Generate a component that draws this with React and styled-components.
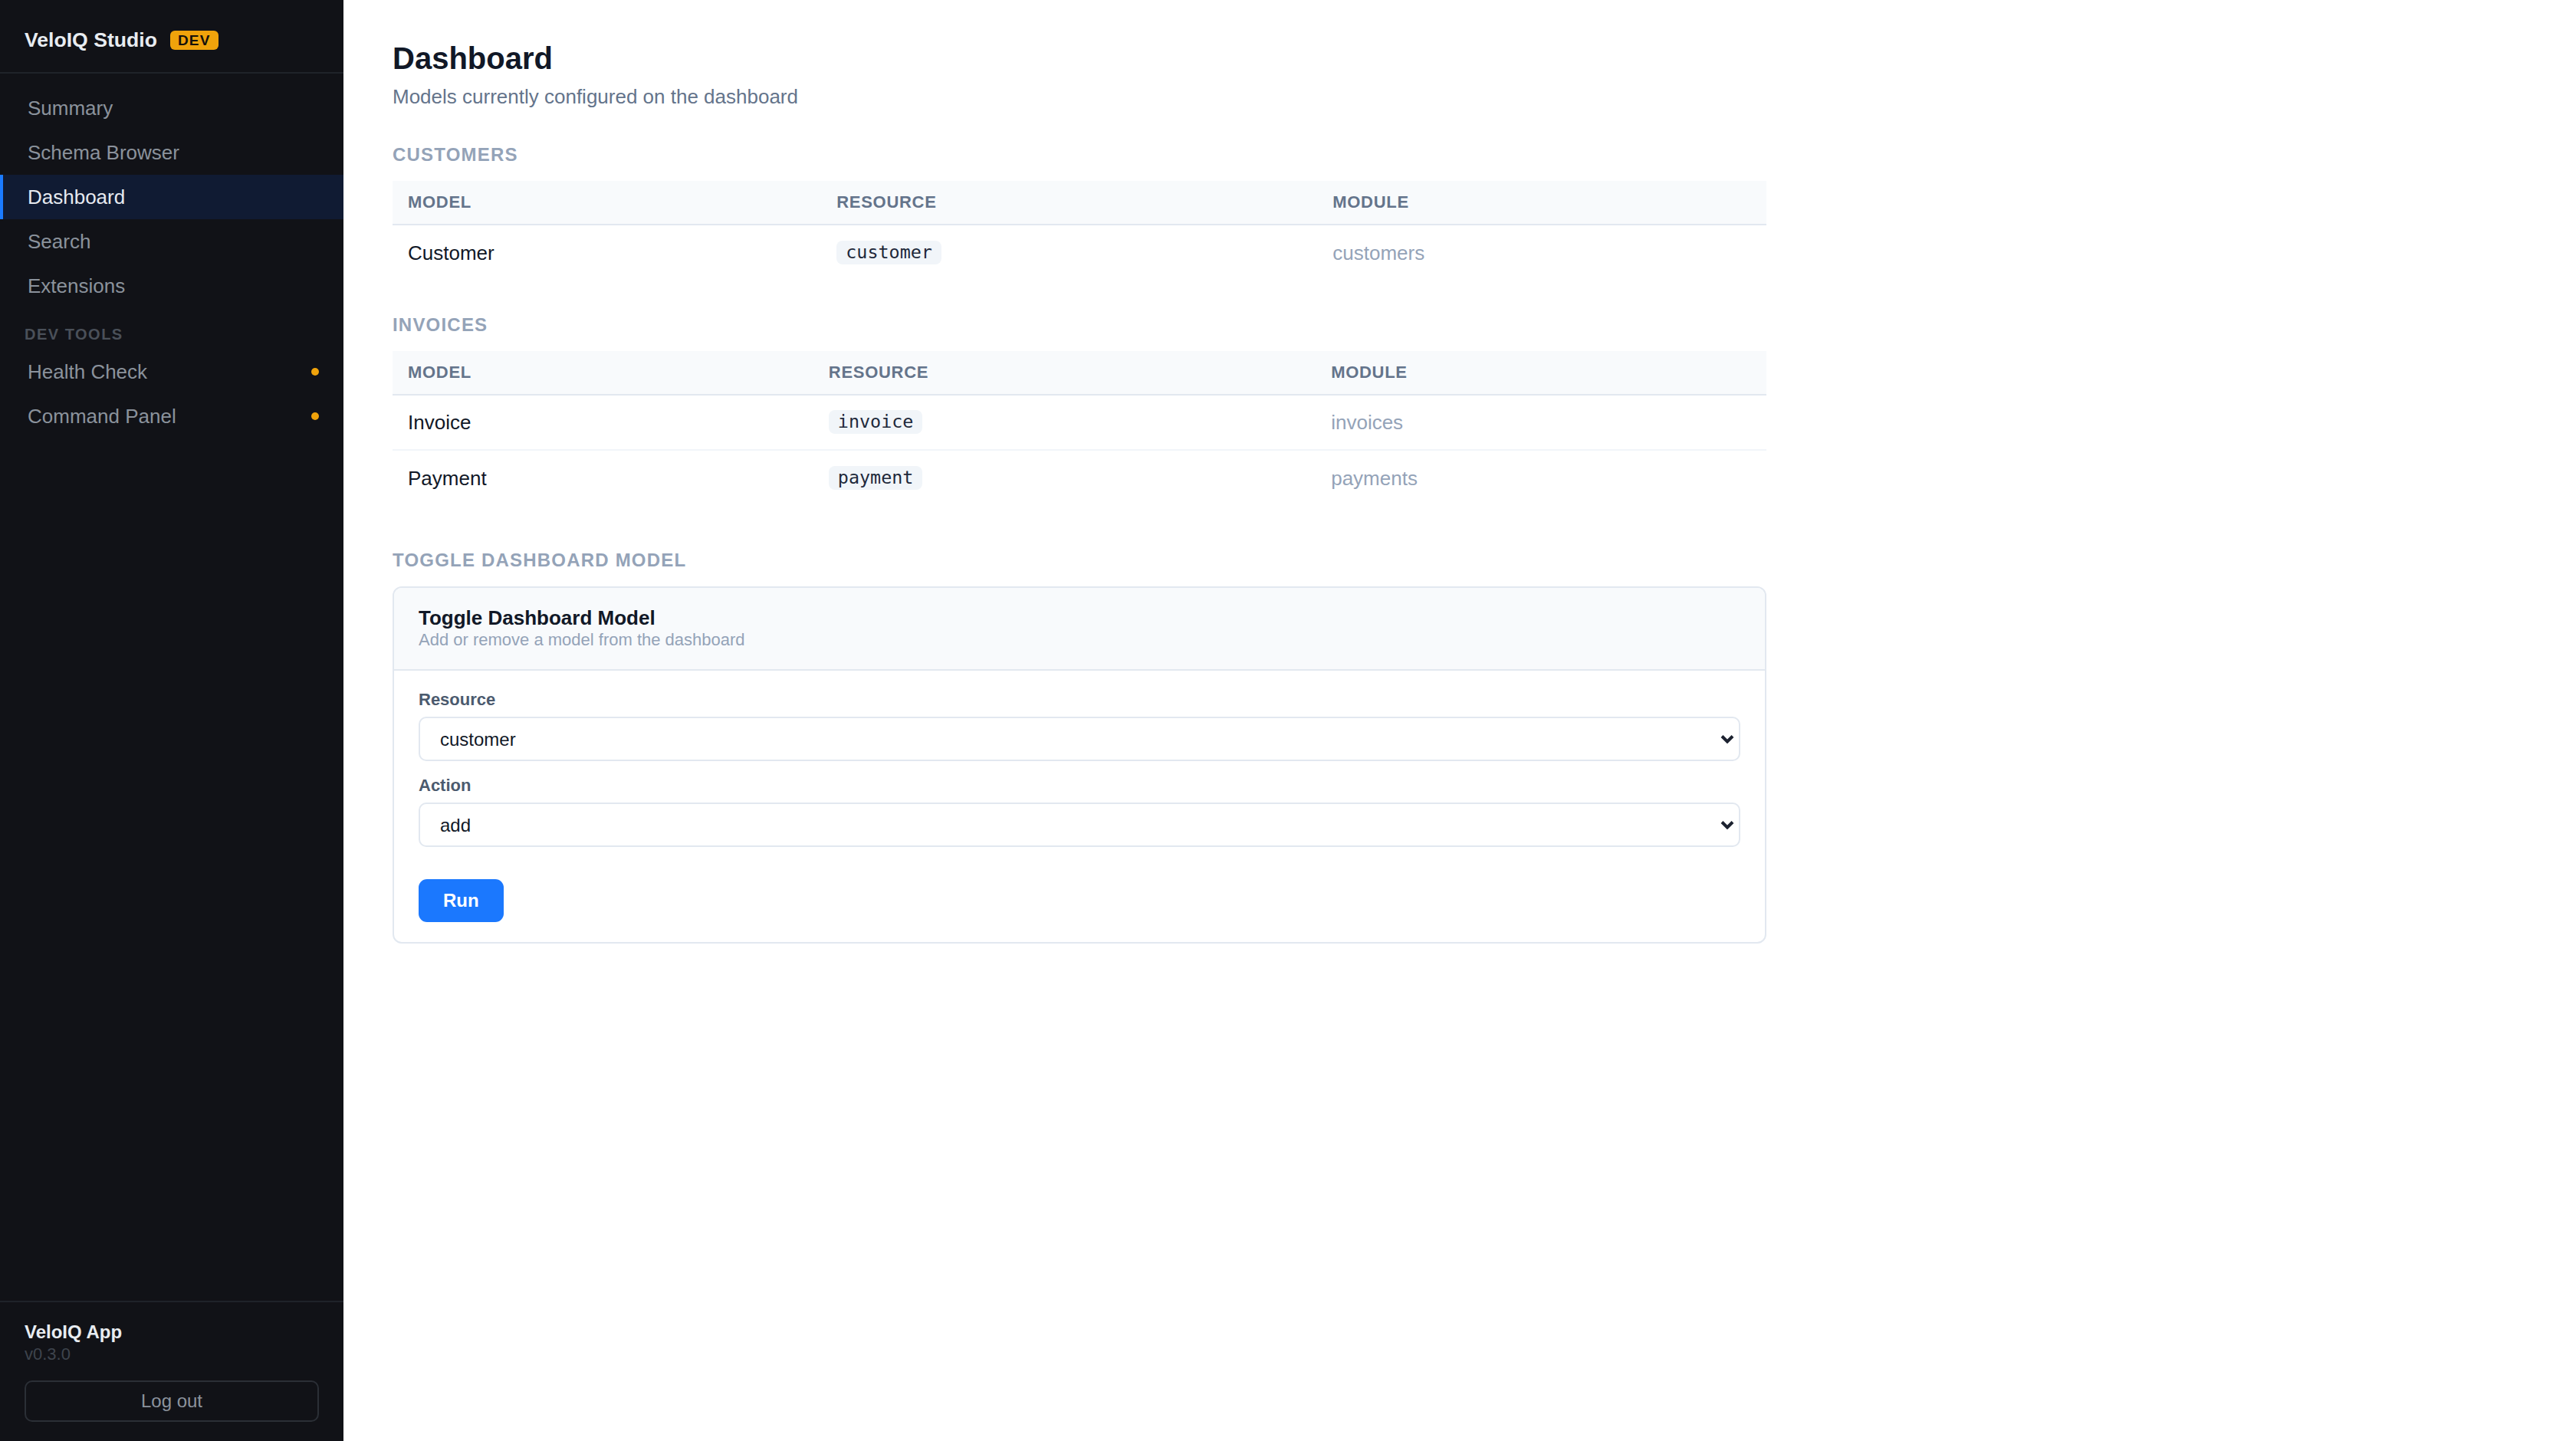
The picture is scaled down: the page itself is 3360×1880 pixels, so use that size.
import React, { useState } from "react"
import styled, { createGlobalStyle } from "styled-components"

const GlobalStyle = createGlobalStyle`
	* {
		box-sizing: border-box;
	}
	html,
	body {
		margin: 0;
		padding: 0;
		height: 100%;
	}
	body {
		font-family: "Liberation Sans", Arial, sans-serif;
		background: #ffffff;
		color: #111827;
	}
`

const navItems = [
	{ label: "Summary" },
	{ label: "Schema Browser" },
	{ label: "Dashboard", active: true },
	{ label: "Search" },
	{ label: "Extensions" },
]

const devItems = [{ label: "Health Check" }, { label: "Command Panel" }]

const sections = [
	{
		title: "Customers",
		rows: [{ model: "Customer", resource: "customer", module: "customers" }],
	},
	{
		title: "Invoices",
		rows: [
			{ model: "Invoice", resource: "invoice", module: "invoices" },
			{ model: "Payment", resource: "payment", module: "payments" },
		],
	},
]

function ChevronDown() {
	return (
		<Chevron width="18" height="12" viewBox="0 0 18 12" aria-hidden="true">
			<polyline
				points="2,2.5 9,9.5 16,2.5"
				fill="none"
				stroke="#1c2230"
				strokeWidth="4"
				strokeLinejoin="miter"
			/>
		</Chevron>
	)
}

function App() {
	const [resource, setResource] = useState("customer")
	const [action, setAction] = useState("add")

	const handleRun = (e) => {
		e.preventDefault()
	}

	return (
		<Shell>
			<GlobalStyle />
			<Sidebar>
				<Brand>
					<BrandName>VeloIQ Studio</BrandName>
					<EnvBadge>DEV</EnvBadge>
				</Brand>

				<Nav>
					{navItems.map((item) => (
						<NavItem key={item.label} $active={item.active}>
							{item.label}
						</NavItem>
					))}
					<NavGroupLabel>Dev Tools</NavGroupLabel>
					{devItems.map((item) => (
						<NavItem key={item.label}>
							{item.label}
							<NavDot />
						</NavItem>
					))}
				</Nav>

				<SidebarFooter>
					<AppName>VeloIQ App</AppName>
					<AppVersion>v0.3.0</AppVersion>
					<LogoutButton>Log out</LogoutButton>
				</SidebarFooter>
			</Sidebar>

			<Main>
				<Content>
					<Title>Dashboard</Title>
					<Subtitle>Models currently configured on the dashboard</Subtitle>

					{sections.map((section) => (
						<Section key={section.title} $gap={43}>
							<SectionLabel>{section.title}</SectionLabel>
							<Table>
								<thead>
									<tr>
										<Th>Model</Th>
										<Th>Resource</Th>
										<Th>Module</Th>
									</tr>
								</thead>
								<tbody>
									{section.rows.map((row) => (
										<Row key={row.resource}>
											<Td>{row.model}</Td>
											<Td>
												<Code>{row.resource}</Code>
											</Td>
											<Td $muted>{row.module}</Td>
										</Row>
									))}
								</tbody>
							</Table>
						</Section>
					))}

					<Section $gap={56}>
						<SectionLabel>Toggle Dashboard Model</SectionLabel>
						<Card>
							<CardHeader>
								<CardTitle>Toggle Dashboard Model</CardTitle>
								<CardHint>Add or remove a model from the dashboard</CardHint>
							</CardHeader>
							<CardBody onSubmit={handleRun}>
								<Field>
									<FieldLabel>Resource</FieldLabel>
									<SelectWrap>
										<Select
											value={resource}
											onChange={(e) => setResource(e.target.value)}
										>
											<option value="customer">customer</option>
											<option value="invoice">invoice</option>
											<option value="payment">payment</option>
										</Select>
										<ChevronDown />
									</SelectWrap>
								</Field>
								<Field>
									<FieldLabel>Action</FieldLabel>
									<SelectWrap>
										<Select
											value={action}
											onChange={(e) => setAction(e.target.value)}
										>
											<option value="add">add</option>
											<option value="remove">remove</option>
										</Select>
										<ChevronDown />
									</SelectWrap>
								</Field>
								<Actions>
									<RunButton type="submit">Run</RunButton>
								</Actions>
							</CardBody>
						</Card>
					</Section>
				</Content>
			</Main>
		</Shell>
	)
}

export default App

const Shell = styled.div`
	display: flex;
	min-height: 100vh;
`

/* sidebar */

const Sidebar = styled.aside`
	width: 448px;
	flex-shrink: 0;
	height: 100vh;
	position: sticky;
	top: 0;
	display: flex;
	flex-direction: column;
	background: #111217;
`

const Brand = styled.div`
	height: 96px;
	padding: 10px 32px 0;
	display: flex;
	align-items: center;
	gap: 17px;
	border-bottom: 2px solid #1f2329;
`

const BrandName = styled.span`
	font-size: 26.6px;
	font-weight: 700;
	color: #e8ecf1;
`

const EnvBadge = styled.span`
	height: 25px;
	line-height: 25px;
	padding: 0 10px;
	border-radius: 6px;
	background: #f0a30b;
	color: #15110a;
	font-size: 19px;
	font-weight: 700;
	letter-spacing: 1.2px;
`

const Nav = styled.nav`
	display: flex;
	flex-direction: column;
	padding-top: 16px;
`

const NavItem = styled.a`
	height: 58px;
	display: flex;
	align-items: center;
	justify-content: space-between;
	padding: 0 32px 0 32px;
	border-left: 4px solid ${(p) => (p.$active ? "#1b7bff" : "transparent")};
	background: ${(p) => (p.$active ? "#101b33" : "transparent")};
	color: ${(p) => (p.$active ? "#e6eaf0" : "#8b929c")};
	font-size: 26px;
	cursor: pointer;
`

const NavDot = styled.span`
	width: 10px;
	height: 10px;
	border-radius: 50%;
	background: #f0a30b;
`

const NavGroupLabel = styled.div`
	padding: 22px 32px 8px;
	line-height: 24px;
	font-size: 20px;
	font-weight: 700;
	letter-spacing: 1.5px;
	text-transform: uppercase;
	color: #4a5059;
`

const SidebarFooter = styled.div`
	margin-top: auto;
	padding: 24px 32px 25px;
	border-top: 2px solid #1f2329;
`

const AppName = styled.div`
	font-size: 24px;
	line-height: 30px;
	font-weight: 700;
	color: #e8ecf1;
`

const AppVersion = styled.div`
	font-size: 22px;
	line-height: 28px;
	color: #3e444d;
`

const LogoutButton = styled.button`
	display: block;
	width: 100%;
	height: 54px;
	margin-top: 20px;
	border: 2px solid #2b2f36;
	border-radius: 10px;
	background: transparent;
	color: #8c939d;
	font-family: inherit;
	font-size: 24px;
	cursor: pointer;
`

/* main area */

const Main = styled.main`
	flex: 1;
	padding: 48px 64px;
`

const Content = styled.div`
	max-width: 1792px;
`

const Title = styled.h1`
	margin: 0;
	font-size: 40px;
	line-height: 56px;
	font-weight: 700;
	color: #111827;
`

const Subtitle = styled.p`
	margin: 5px 0 0;
	font-size: 26px;
	line-height: 34px;
	color: #64748b;
`

const Section = styled.section`
	margin-top: ${(p) => p.$gap}px;
`

const SectionLabel = styled.h2`
	margin: 0 0 18px;
	font-size: 24px;
	line-height: 32px;
	font-weight: 700;
	letter-spacing: 1.2px;
	text-transform: uppercase;
	color: #94a3b8;
`

const Table = styled.table`
	width: 100%;
	border-collapse: collapse;
`

const Th = styled.th`
	padding: 16px 20px;
	line-height: 24px;
	background: #f8fafc;
	border-bottom: 2px solid #e2e8f0;
	text-align: left;
	font-size: 22px;
	font-weight: 700;
	letter-spacing: 0.7px;
	text-transform: uppercase;
	color: #64748b;
`

const Row = styled.tr`
	& + & td {
		border-top: 2px solid #f1f5f9;
	}
`

const Td = styled.td`
	height: 72px;
	padding: 0 20px;
	line-height: 32px;
	font-size: 26px;
	vertical-align: middle;
	color: ${(p) => (p.$muted ? "#94a3b8" : "#111827")};
`

const Code = styled.code`
	display: inline-block;
	padding: 3px 12px;
	border-radius: 8px;
	background: #f1f5f9;
	font-family: "DejaVu Sans Mono", "Liberation Mono", monospace;
	font-size: 0.9em;
	line-height: 25px;
	color: #1e293b;
	vertical-align: top;
`

/* toggle form card */

const Card = styled.div`
	border: 2px solid #e2e8f0;
	border-radius: 12px;
	overflow: hidden;
`

const CardHeader = styled.div`
	padding: 24px 32px;
	background: #f8fafc;
	border-bottom: 2px solid #e2e8f0;
`

const CardTitle = styled.div`
	font-size: 26px;
	line-height: 30px;
	font-weight: 700;
	color: #111827;
`

const CardHint = styled.div`
	font-size: 22px;
	line-height: 28px;
	color: #94a3b8;
`

const CardBody = styled.form`
	display: flex;
	flex-direction: column;
	gap: 18px;
	padding: 24px 32px 26px;
`

const Field = styled.div`
	display: flex;
	flex-direction: column;
	gap: 8px;
`

const FieldLabel = styled.label`
	font-size: 22px;
	line-height: 28px;
	font-weight: 700;
	color: #4b5a6e;
`

const SelectWrap = styled.div`
	position: relative;
`

const Select = styled.select`
	appearance: none;
	width: 100%;
	height: 58px;
	padding: 0 48px 0 26px;
	border: 2px solid #e2e8f0;
	border-radius: 10px;
	background: #ffffff;
	font-family: inherit;
	font-size: 24px;
	color: #111827;
	outline: none;
`

const Chevron = styled.svg`
	position: absolute;
	right: 8px;
	top: 50%;
	transform: translateY(-50%);
	pointer-events: none;
`

const Actions = styled.div`
	display: flex;
	margin-top: 24px;
`

const RunButton = styled.button`
	height: 56px;
	padding: 0 32px;
	border: none;
	border-radius: 11px;
	background: #1b78fe;
	color: #ffffff;
	font-family: inherit;
	font-size: 24px;
	font-weight: 700;
	cursor: pointer;
`
